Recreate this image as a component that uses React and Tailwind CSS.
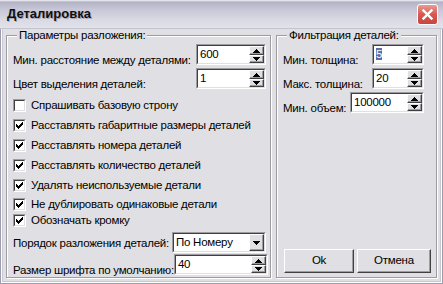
import React from "react";

const F = "font-['Liberation_Sans',Arial,sans-serif]";

function Tri({ up }) {
  return (
    <svg width="7" height="4" viewBox="0 0 7 4" shapeRendering="crispEdges">
      {up ? (
        <g fill="#000">
          <rect x="3" y="0" width="1" height="1" />
          <rect x="2" y="1" width="3" height="1" />
          <rect x="1" y="2" width="5" height="1" />
          <rect x="0" y="3" width="7" height="1" />
        </g>
      ) : (
        <g fill="#000">
          <rect x="0" y="0" width="7" height="1" />
          <rect x="1" y="1" width="5" height="1" />
          <rect x="2" y="2" width="3" height="1" />
          <rect x="3" y="3" width="1" height="1" />
        </g>
      )}
    </svg>
  );
}

function RaisedBox({ className = "", children }) {
  return (
    <div
      className={`flex items-center justify-center bg-[#e0dfe3] border border-t-white border-l-white border-r-[#404040] border-b-[#404040] shadow-[inset_-1px_-1px_0_#9d9da1] ${className}`}
    >
      {children}
    </div>
  );
}

function Sunken({ className = "", children }) {
  return (
    <div className={`shrink-0 border border-t-[#9d9da1] border-l-[#9d9da1] border-r-white border-b-white ${className}`}>
      <div className="flex h-full border border-t-[#404040] border-l-[#404040] border-r-[#e0dfe3] border-b-[#e0dfe3] bg-white">
        {children}
      </div>
    </div>
  );
}

function Spin({ value, className = "", selected }) {
  return (
    <Sunken className={`h-[21px] ${className}`}>
      <div className="flex-1 pl-[2px] pt-[1px] leading-[14px]">
        {selected ? (
          <span className="bg-[#5e6ca6] text-white">{value}</span>
        ) : (
          value
        )}
      </div>
      <div className="flex flex-col w-[15px]">
        <RaisedBox className="h-[9px]">
          <Tri up />
        </RaisedBox>
        <RaisedBox className="h-[8px]">
          <Tri />
        </RaisedBox>
      </div>
    </Sunken>
  );
}

function Combo({ value, className = "" }) {
  return (
    <Sunken className={`h-[21px] ${className}`}>
      <div className="flex-1 pl-[2px] pt-[1px] leading-[14px]">{value}</div>
      <RaisedBox className="w-[15px] h-[17px]">
        <Tri />
      </RaisedBox>
    </Sunken>
  );
}

function CheckBox({ checked }) {
  return (
    <div className="w-[13px] h-[13px] shrink-0 border border-t-[#9d9da1] border-l-[#9d9da1] border-r-white border-b-white">
      <div className="w-full h-full border border-t-[#404040] border-l-[#404040] border-r-[#e0dfe3] border-b-[#e0dfe3] bg-white flex items-center justify-center">
        {checked && (
          <svg width="7" height="7" viewBox="0 0 7 7" shapeRendering="crispEdges">
            <path d="M0 2h1v1h1v1h1v-1h1v-1h1v-1h1v-1h1v3h-1v1h-1v1h-1v1h-1v1h-1v-1h-1v-1h-1v-1h-1z" fill="#000" />
          </svg>
        )}
      </div>
    </div>
  );
}

function CheckRow({ checked, label, h }) {
  return (
    <div className={`flex items-center gap-[5px] ${h}`}>
      <CheckBox checked={checked} />
      <span className="leading-[14px] whitespace-nowrap">{label}</span>
    </div>
  );
}

function Group({ label, className = "", children }) {
  return (
    <fieldset
      className={`min-w-0 border border-[#9d9da1] shadow-[inset_1px_1px_0_#fff,1px_1px_0_#fff] ${className}`}
    >
      <legend className="ml-[4px] px-[2px] leading-[13px] bg-[#e0dfe3]">{label}</legend>
      {children}
    </fieldset>
  );
}

function Button({ children, className = "" }) {
  return (
    <div
      className={`h-[24px] flex items-center justify-center bg-[#e0dfe3] border border-t-white border-l-white border-r-[#404040] border-b-[#404040] shadow-[inset_-1px_-1px_0_#9d9da1] ${className}`}
    >
      {children}
    </div>
  );
}

export default function App() {
  return (
    <div className={`w-[443px] h-[284px] flex flex-col bg-[#e0dfe3] ${F} text-[11.5px] tracking-[-0.25px] text-black overflow-hidden`}>
      {/* Title bar */}
      <div className="h-[29px] shrink-0 flex items-center justify-between pl-[7px] pr-[5px] bg-[linear-gradient(to_bottom,#f4f4f8_0px,#b3b3c6_2px,#c6c6d6_9px,#dadae4_20px,#e2e2ea_28px)] border-b border-[#c4c4d0]">
        <span className="font-bold text-[13px] tracking-normal text-[#101010] [text-shadow:1px_1px_0_#a8a8b8]">Деталировка</span>
        <div className="w-[21px] h-[21px] rounded-[3px] border border-white bg-[linear-gradient(to_bottom,#ec9a92,#d8584f_50%,#c9463f)] flex items-center justify-center">
          <svg width="11" height="11" viewBox="0 0 11 11">
            <path d="M1.5 1.5L9.5 9.5M9.5 1.5L1.5 9.5" stroke="#fff" strokeWidth="2.4" strokeLinecap="square" />
          </svg>
        </div>
      </div>

      {/* Body with window frame */}
      <div className="flex-1 flex flex-col border-x border-b border-[#9c9cac]">
        <div className="flex-1 flex flex-col border-x border-b border-white">
          <div className="flex-1 flex gap-[5px] pl-[3px] pr-[3px] pb-[3px] border-x border-b border-[#c8c8d2]">
            {/* Left group */}
            <Group label="Параметры разложения:" className="w-[265px] shrink-0 flex flex-col pl-[6px] pr-[4px]">
              <div className="flex items-end justify-between h-[21px] mt-[2px]">
                <span className="leading-[14px] mb-[-2px] whitespace-nowrap">Мин. расстояние между деталями:</span>
                <Spin value="600" className="w-[70px]" />
              </div>
              <div className="flex items-end justify-between h-[21px] mt-[3px]">
                <span className="leading-[14px] mb-[-2px] whitespace-nowrap">Цвет выделения деталей:</span>
                <Spin value="1" className="w-[70px]" />
              </div>
              <div className="flex flex-col mt-[6px]">
                <CheckRow h="h-[20px]" label="Спрашивать базовую строну" />
                <CheckRow h="h-[20px]" checked label="Расставлять габаритные размеры деталей" />
                <CheckRow h="h-[20px]" checked label="Расставлять номера деталей" />
                <CheckRow h="h-[20px]" checked label="Расставлять количество деталей" />
                <CheckRow h="h-[20px]" checked label="Удалять неиспользуемые детали" />
                <CheckRow h="h-[18px]" checked label="Не дублировать одинаковые детали" />
                <CheckRow h="h-[14px]" checked label="Обозначать кромку" />
              </div>
              <div className="flex items-center justify-between h-[21px] mt-[5px]">
                <span className="leading-[14px] whitespace-nowrap">Порядок разложения деталей:</span>
                <Combo value="По Номеру" className="w-[94px]" />
              </div>
              <div className="flex items-end justify-between h-[21px] mt-[1px]">
                <span className="leading-[14px] mb-[-2px] whitespace-nowrap">Размер шрифта по умолчанию:</span>
                <Spin value="40" className="w-[94px]" />
              </div>
            </Group>

            {/* Right group */}
            <Group label="Фильтрация деталей:" className="flex-1 flex flex-col pl-[6px] pr-[5px]">
              <div className="flex items-end h-[21px] mt-[2px]">
                <span className="leading-[14px] mb-[-2px] whitespace-nowrap w-[89px]">Мин. толщина:</span>
                <Spin value="5" selected className="w-[52px]" />
              </div>
              <div className="flex items-end h-[21px] mt-[3px]">
                <span className="leading-[14px] mb-[-2px] whitespace-nowrap w-[89px]">Макс. толщина:</span>
                <Spin value="20" className="w-[52px]" />
              </div>
              <div className="flex items-end h-[21px] mt-[3px]">
                <span className="leading-[14px] mb-[-2px] whitespace-nowrap w-[67px]">Мин. объем:</span>
                <Spin value="100000" className="w-[74px]" />
              </div>
              <div className="flex-1" />
              <div className="flex gap-[3px] pl-[1px] mb-[4px]">
                <Button className="w-[70px]">Ok</Button>
                <Button className="w-[74px]">Отмена</Button>
              </div>
            </Group>
          </div>
        </div>
      </div>
    </div>
  );
}
